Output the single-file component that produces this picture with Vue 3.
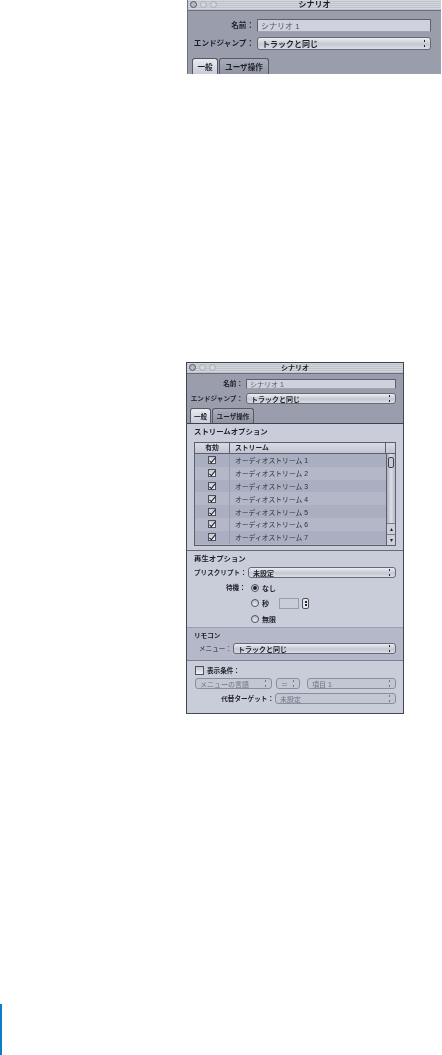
<template>
  <div class="page">
    <!-- 上のウィンドウ -->
    <div class="win win-top">
      <div class="titlebar">
        <div class="lights"><i class="light first"></i><i class="light"></i><i class="light"></i></div>
        <span class="title">シナリオ</span>
      </div>
      <div class="head">
        <div class="row">
          <label>名前：</label>
          <div class="field">シナリオ 1</div>
        </div>
        <div class="row">
          <label>エンドジャンプ：</label>
          <div class="popup"><b>トラックと同じ</b><span class="arrows"></span></div>
        </div>
        <div class="tabs">
          <div class="tab active">一般</div>
          <div class="tab">ユーザ操作</div>
        </div>
      </div>
    </div>

    <!-- 下のウィンドウ -->
    <div class="win win-main">
      <div class="titlebar">
        <div class="lights"><i class="light first"></i><i class="light"></i><i class="light"></i></div>
        <span class="title">シナリオ</span>
      </div>
      <div class="head">
        <div class="row">
          <label>名前：</label>
          <div class="field">シナリオ 1</div>
        </div>
        <div class="row">
          <label>エンドジャンプ：</label>
          <div class="popup"><b>トラックと同じ</b><span class="arrows"></span></div>
        </div>
        <div class="tabs">
          <div class="tab active">一般</div>
          <div class="tab">ユーザ操作</div>
        </div>
      </div>

      <section class="sec sec-stream">
        <h4>ストリームオプション</h4>
        <div class="table">
          <div class="thead">
            <span class="c1">有効</span>
            <span class="c2">ストリーム</span>
            <span class="c3"></span>
          </div>
          <div class="tbody">
            <div class="rows">
              <div v-for="(s, i) in streams" :key="s" class="trow" :class="{ odd: i % 2 === 0 }">
                <span class="c1"><span class="check on"></span></span>
                <span class="c2">{{ s }}</span>
              </div>
            </div>
            <div class="scroll">
              <div class="thumb"></div>
              <div class="track"></div>
              <div class="step">▴</div>
              <div class="step">▾</div>
            </div>
          </div>
        </div>
      </section>

      <section class="sec sec-play">
        <h4>再生オプション</h4>
        <div class="form-row">
          <label class="pre">プリスクリプト：</label>
          <div class="popup"><b>未設定</b><span class="arrows"></span></div>
        </div>
        <div class="radios">
          <div class="radio-row">
            <label class="wait">待機：</label>
            <span class="radio on"></span><b>なし</b>
          </div>
          <div class="radio-row">
            <span class="radio"></span><b>秒</b>
            <span class="sec-input"></span><span class="stepper"></span>
          </div>
          <div class="radio-row">
            <span class="radio"></span><b>無限</b>
          </div>
        </div>
      </section>

      <section class="sec sec-remote">
        <h4>リモコン</h4>
        <div class="form-row">
          <label class="menu">メニュー：</label>
          <div class="popup"><b>トラックと同じ</b><span class="arrows"></span></div>
        </div>
      </section>

      <section class="sec sec-cond">
        <div class="cond-head"><span class="check"></span><b>表示条件：</b></div>
        <div class="cond-row">
          <div class="popup dim p1"><span>メニューの言語</span><span class="arrows"></span></div>
          <div class="popup dim p2"><span>＝</span><span class="arrows"></span></div>
          <div class="popup dim p3"><span>項目 1</span><span class="arrows"></span></div>
        </div>
        <div class="form-row alt">
          <label class="target">代替ターゲット：</label>
          <div class="popup dim"><span>未設定</span><span class="arrows"></span></div>
        </div>
      </section>
    </div>

    <div class="edge"></div>
  </div>
</template>

<script setup>
const streams = [1, 2, 3, 4, 5, 6, 7].map((n) => `オーディオストリーム ${n}`)
</script>

<style>
html, body { background: #fff; }
</style>

<style scoped>
.page {
  width: 442px;
  height: 1055px;
  overflow: hidden;
  display: flex;
  flex-direction: column;
  font-family: "Liberation Sans", "Noto Sans CJK JP", sans-serif;
  color: #1e2028;
}

.win {
  box-sizing: border-box;
  background: #9a9dab;
  filter: blur(0.4px);
}
.win-top {
  width: 254px;
  height: 74px;
  margin-left: 187px;
  border-left: 1px solid #6e7180;
}
.win-main {
  width: 218px;
  margin-left: 186px;
  margin-top: 288px;
  height: 352px;
  display: flex;
  flex-direction: column;
  border: 1px solid #454853;
  border-top-color: #3c3e48;
}

.titlebar {
  height: 10px;
  position: relative;
  display: flex;
  align-items: center;
  justify-content: center;
  background: repeating-linear-gradient(#d5d7de 0 1px, #bfc1ca 1px 2px);
  border-bottom: 1px solid #6b6e7b;
}
.lights {
  position: absolute;
  left: 2px;
  top: 1px;
  display: flex;
  gap: 3px;
}
.light {
  width: 7px;
  height: 7px;
  box-sizing: border-box;
  border-radius: 50%;
  border: 1px solid #a8abb5;
  background: #d4d6dc;
}
.light.first { border-color: #55585f; background: #b8bac2; }
.title { font-size: 7px; font-weight: 700; line-height: 10px; }
.win-top .title { font-size: 8px; }

.head {
  display: flex;
  flex-direction: column;
}
.win-top .head { padding: 8px 10px 0 4px; gap: 5px; }
.win-main .head { padding: 5px 7px 0 3px; gap: 4px; }

.row {
  display: flex;
  align-items: center;
  justify-content: flex-end;
  gap: 3px;
}
label {
  font-size: 6.6px;
  font-weight: 700;
  white-space: nowrap;
  line-height: 10px;
}
.win-top label { font-size: 7.6px; }

.field {
  box-sizing: border-box;
  background: #cfd2dc;
  border: 1px solid #5d606c;
  border-bottom-color: #a0a3b0;
  color: #555864;
  font-size: 7px;
  padding-left: 3px;
  display: flex;
  align-items: center;
}
.win-top .field { width: 174px; height: 13px; font-size: 8px; }
.win-main .field { width: 150px; height: 10px; }

.popup {
  box-sizing: border-box;
  flex: 1;
  height: 11px;
  display: flex;
  align-items: center;
  justify-content: space-between;
  padding: 0 4px 0 4px;
  font-size: 7px;
  background: linear-gradient(#eceef2, #c4c7d2 55%, #dcdee5);
  border: 1px solid #666a76;
  border-radius: 3px;
  white-space: nowrap;
}
.popup b { font-weight: 700; }
.row .popup { flex: none; }
.win-top .row .popup { width: 174px; height: 13px; font-size: 8px; }
.win-main .row .popup { width: 150px; height: 11px; }

.arrows {
  width: 3px;
  height: 7px;
  flex: none;
  background:
    linear-gradient(#22242c, #22242c) 1px 0 / 1px 2px no-repeat,
    linear-gradient(#22242c, #22242c) 1px 5px / 1px 2px no-repeat;
}

.tabs {
  display: flex;
  align-items: flex-end;
  gap: 1px;
}
.win-top .tabs { height: 16px; margin-top: 3px; }
.win-main .tabs { height: 15px; }
.tab {
  box-sizing: border-box;
  height: 100%;
  display: flex;
  align-items: center;
  justify-content: center;
  font-size: 6.6px;
  font-weight: 700;
  background: linear-gradient(#a9acb9, #8f93a2);
  border: 1px solid #555864;
  border-bottom: none;
  border-radius: 3px 3px 0 0;
  white-space: nowrap;
}
.tab.active { background: linear-gradient(#e8eaef, #c8ccd8); }
.win-top .tab { font-size: 7.6px; width: 50px; }
.win-top .tab.active { width: 26px; }
.win-main .tab { width: 42px; }
.win-main .tab.active { width: 21px; }

.sec {
  background: #c9cdda;
  border-top: 1px solid #666a76;
}
.sec h4 {
  margin: 0;
  font-size: 7.4px;
  font-weight: 700;
  line-height: 10px;
}
.sec-stream { height: 127px; box-sizing: border-box; padding: 3px 7px 0 7px; border-top-color: #3f424c; }
.sec-stream h4 { margin-bottom: 5px; }

.table {
  box-sizing: border-box;
  width: 202px;
  height: 104px;
  border: 1px solid #5d606c;
  font-size: 6.8px;
  background: #b3b7c8;
}
.thead {
  display: flex;
  height: 10px;
  background: linear-gradient(#d8dbe3, #c3c6d2);
  border-bottom: 1px solid #5d606c;
  font-weight: 700;
  line-height: 10px;
}
.c1 { width: 34px; flex: none; text-align: center; display: flex; justify-content: center; align-items: center; }
.c2 { flex: 1; padding-left: 5px; }
.c3 { width: 9px; flex: none; border-left: 1px solid #5d606c; }
.thead .c1 { border-right: 1px solid #5d606c; }

.tbody { display: flex; height: 91px; }
.rows { flex: 1; }
.trow {
  display: flex;
  height: 12.8px;
  align-items: center;
  background: #b3b7c8;
  color: #2c2e3a;
}
.trow.odd { background: #a9aec0; }
.trow .c1 { height: 100%; border-right: 1px solid #989cae; box-sizing: content-box; }

.check {
  display: block;
  position: relative;
  box-sizing: border-box;
  width: 8px;
  height: 8px;
  background: linear-gradient(#c2c5d0, #f2f3f6);
  border: 1px solid #4d505c;
}
.check.on::after {
  content: "";
  position: absolute;
  left: 2px;
  top: -1px;
  width: 2px;
  height: 6px;
  border: solid #15171e;
  border-width: 0 1.6px 1.6px 0;
  transform: rotate(40deg);
}

.scroll {
  width: 9px;
  flex: none;
  display: flex;
  flex-direction: column;
  box-sizing: border-box;
  border-left: 1px solid #5d606c;
  background: linear-gradient(90deg, #aeb1bf, #dcdfe6 50%, #b5b8c6);
}
.thumb {
  width: 6px;
  height: 11px;
  margin: 3px 0 0 1px;
  box-sizing: border-box;
  border: 1px solid #3d4050;
  border-radius: 2px;
  background: #c9ccd8;
}
.track { flex: 1; }
.step {
  height: 10px;
  font-size: 6px;
  line-height: 10px;
  text-align: center;
  border-top: 1px solid #7a7d8c;
  background: #cdd0da;
}

.sec-play { height: 77px; box-sizing: border-box; padding: 3px 7px 0 7px; }
.form-row {
  display: flex;
  align-items: center;
  gap: 1px;
}
.sec-play .form-row { margin-top: 3px; }
.pre { width: 53px; }

.radios { margin-top: 2px; padding-left: 31px; display: flex; flex-direction: column; }
.radio-row {
  height: 15.5px;
  display: flex;
  align-items: center;
  padding-left: 26px;
  position: relative;
  font-size: 7px;
}
.radio-row b { font-weight: 700; margin-left: 3px; }
.radio-row .wait { position: absolute; left: 1px; top: 3px; }
.radio {
  box-sizing: border-box;
  width: 8px;
  height: 8px;
  border-radius: 50%;
  border: 1px solid #4d505c;
  background: linear-gradient(#b9bcc9, #eef0f4);
  flex: none;
  display: flex;
  align-items: center;
  justify-content: center;
}
.radio.on::after {
  content: "";
  width: 4px;
  height: 4px;
  border-radius: 50%;
  background: #1e2028;
}
.sec-input {
  width: 20px;
  height: 11px;
  margin-left: 10px;
  box-sizing: border-box;
  border: 1px solid #9a9dab;
  background: #c9cdda;
}
.stepper {
  width: 7px;
  height: 11px;
  margin-left: 3px;
  box-sizing: border-box;
  border: 1px solid #4d505c;
  border-radius: 2px;
  background:
    linear-gradient(#22242c, #22242c) 1.5px 2px / 2px 2px no-repeat,
    linear-gradient(#22242c, #22242c) 1.5px 5px / 2px 2px no-repeat,
    #e4e6eb;
}

.sec-remote {
  height: 33px;
  box-sizing: border-box;
  padding: 3px 7px 0 7px;
  background: #b4b8c8;
  border-top-color: #9c9fae;
}
.sec-remote h4 { font-size: 6.6px; }
.sec-remote .form-row { margin-top: 2px; }
.menu { width: 38px; text-align: right; font-weight: 400; }

.sec-cond {
  flex: 1;
  padding: 4px 7px 0 8px;
  border-top-color: #7d808e;
}
.cond-head {
  display: flex;
  align-items: center;
  gap: 3px;
  font-size: 6.6px;
  height: 10px;
}
.cond-head .check { width: 9px; height: 9px; }
.cond-head b { font-weight: 700; }
.cond-row { display: flex; margin-top: 3px; }
.popup.dim {
  color: #6f7280;
  background: #c3c6d3;
  border-color: #8a8d9b;
}
.popup.dim .arrows {
  background:
    linear-gradient(#6f7280, #6f7280) 1px 0 / 1px 2px no-repeat,
    linear-gradient(#6f7280, #6f7280) 1px 5px / 1px 2px no-repeat;
}
.p1 { flex: none; width: 77px; }
.p2 { flex: none; width: 24px; margin: 0 7px 0 4px; }
.p3 { flex: 1; }
.alt { margin-top: 4px; }
.target { width: 79px; text-align: right; }

.edge {
  width: 2px;
  flex: 1;
  margin-top: 290px;
  background: #0a7fc6;
}
</style>
